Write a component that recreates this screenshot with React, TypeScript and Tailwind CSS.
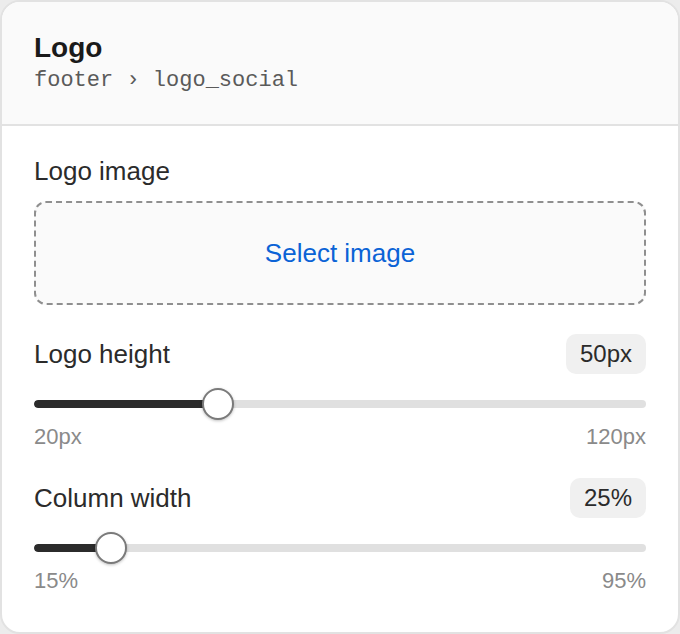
import React from "react";

function Slider({ pct }: { pct: number }) {
  return (
    <div className="relative h-8 flex items-center">
      <div className="w-full h-2 rounded-full bg-[#e0e0e0] overflow-hidden">
        <div className="h-full bg-[#2b2b2b] rounded-full" style={{ width: `${pct}%` }} />
      </div>
      <div
        className="absolute top-0 w-8 h-8 -ml-4 rounded-full bg-white border-2 border-[#7a7a7a] shadow-[0_1px_3px_rgba(0,0,0,0.25)]"
        style={{ left: `${pct}%` }}
      />
    </div>
  );
}

function SliderField({
  label,
  value,
  pct,
  min,
  max,
}: {
  label: string;
  value: string;
  pct: number;
  min: string;
  max: string;
}) {
  return (
    <div className="flex flex-col">
      <div className="flex items-center justify-between h-10">
        <span className="text-[26px] leading-8 text-[#2b2b2b]">{label}</span>
        <span className="h-10 px-[14px] flex items-center rounded-[10px] bg-[#f0f0f0] text-[24px] text-[#2b2b2b]">
          {value}
        </span>
      </div>
      <div className="mt-[14px]">
        <Slider pct={pct} />
      </div>
      <div className="mt-1 flex justify-between text-[22px] leading-[26px] text-[#8a8a8a]">
        <span>{min}</span>
        <span>{max}</span>
      </div>
    </div>
  );
}

export default function App() {
  return (
    <div
      className="w-[680px] h-[634px] bg-[#ececec]"
      style={{ fontFamily: '"Liberation Sans", Arial, sans-serif' }}
    >
      <div className="w-full h-full rounded-[20px] border-2 border-[#e2e2e2] bg-white overflow-hidden flex flex-col">
        <div className="bg-[#fafafa] border-b-2 border-[#e2e2e2] px-8 pt-[30px] pb-[29px]">
          <div className="text-[28px] leading-8 font-bold text-[#1a1a1a]">Logo</div>
          <div
            className="mt-[3px] text-[22px] leading-7 text-[#5a5a5a]"
            style={{ fontFamily: '"Liberation Mono", "Courier New", monospace' }}
          >
            footer › logo_social
          </div>
        </div>
        <div className="px-8 pt-[29px] flex flex-col">
          <div className="text-[26px] leading-8 text-[#2b2b2b]">Logo image</div>
          <div className="mt-[14px] h-[104px] rounded-[12px] border-2 border-dashed border-[#8f8f8f] bg-[#fafafa] flex items-center justify-center">
            <span className="text-[26px] text-[#0b63d6]">Select image</span>
          </div>
          <div className="mt-[29px]">
            <SliderField label="Logo height" value="50px" pct={30} min="20px" max="120px" />
          </div>
          <div className="mt-[28px]">
            <SliderField label="Column width" value="25%" pct={12.5} min="15%" max="95%" />
          </div>
        </div>
      </div>
    </div>
  );
}
